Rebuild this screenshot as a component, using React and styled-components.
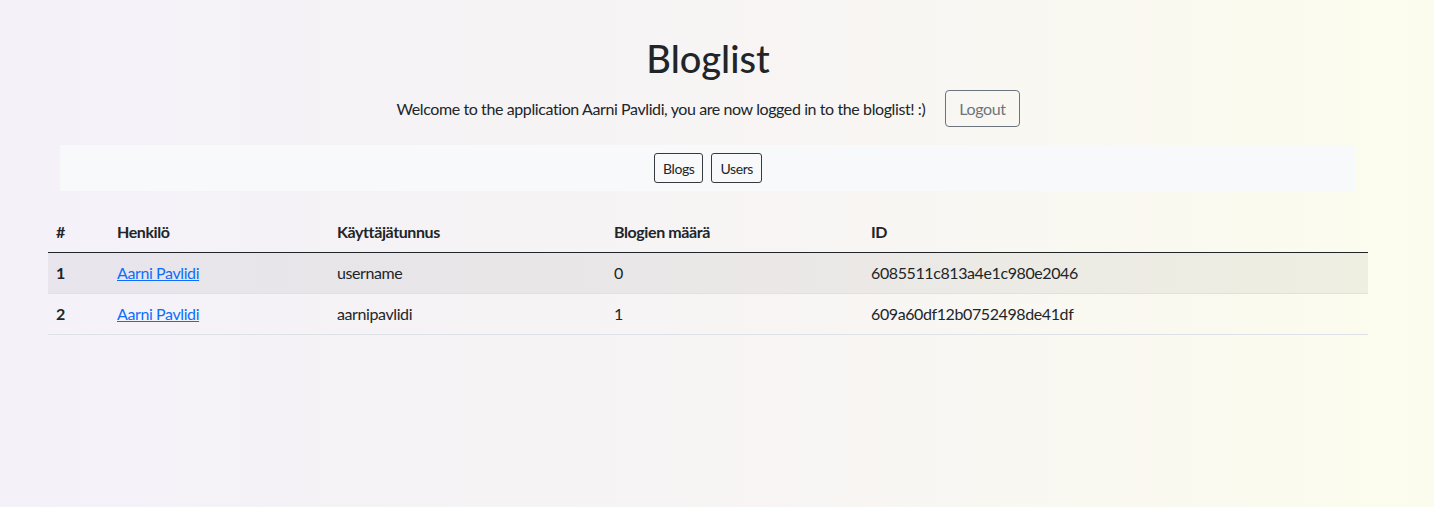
import React from 'react';
import styled, { createGlobalStyle } from 'styled-components';

const GlobalStyle = createGlobalStyle`
  html, body {
    margin: 0;
    padding: 0;
  }
  body {
    min-height: 507px;
    background: linear-gradient(90deg, #f4f1f9 0%, #f7f4f4 50%, #fcfcee 100%);
    font-family: Lato, "Noto Sans", sans-serif;
    color: #212529;
    letter-spacing: -0.4px;
  }
`;

const Page = styled.div`
  width: 1416px;
  padding-top: 34px;
`;

const Container = styled.div`
  width: 1320px;
  margin: 0 auto;
`;

const Title = styled.h1`
  margin: 0 0 8px;
  text-align: center;
  font-size: 38px;
  font-weight: 500;
  line-height: 48px;
  letter-spacing: 0;
`;

const Welcome = styled.div`
  display: flex;
  justify-content: center;
  align-items: center;
  gap: 20px;
  font-size: 16px;
`;

const OutlineButton = styled.button`
  font-family: inherit;
  letter-spacing: inherit;
  background: transparent;
  cursor: pointer;
  border-radius: ${(p) => (p.small ? '3px' : '4px')};
  border: 1px solid ${(p) => (p.dark ? '#343a40' : '#6c757d')};
  color: ${(p) => (p.dark ? '#212529' : '#6c757d')};
  font-size: ${(p) => (p.small ? '14px' : '16px')};
  height: ${(p) => (p.small ? '30px' : '37px')};
  padding: ${(p) => (p.small ? '0 8px' : '0 13px')};
`;

const NavBar = styled.nav`
  margin: 18px 12px 21px;
  height: 46px;
  background: #f8f9fa;
  display: flex;
  justify-content: center;
  align-items: center;
  gap: 8px;
`;

const Table = styled.table`
  width: 100%;
  table-layout: fixed;
  border-collapse: collapse;
  font-size: 16px;
`;

const HeadCell = styled.th`
  box-sizing: border-box;
  text-align: left;
  font-weight: 700;
  padding: 8px;
  line-height: 24px;
  border-bottom: 1px solid #212529;
  width: ${(p) => p.w || 'auto'};
`;

const Row = styled.tr`
  background: ${(p) => (p.striped ? 'rgba(0, 0, 0, 0.05)' : 'transparent')};
`;

const Cell = styled.td`
  padding: 8px;
  line-height: 24px;
  border-bottom: 1px solid #dee2e6;
  font-weight: ${(p) => (p.bold ? 700 : 400)};
`;

const UserLink = styled.a`
  color: #0d6efd;
  text-decoration: underline;
`;

const users = [
  { name: 'Aarni Pavlidi', username: 'username', blogs: 0, id: '6085511c813a4e1c980e2046' },
  { name: 'Aarni Pavlidi', username: 'aarnipavlidi', blogs: 1, id: '609a60df12b0752498de41df' },
];

const App = () => (
  <>
    <GlobalStyle />
    <Page>
      <Container>
        <Title>Bloglist</Title>
        <Welcome>
          <span>Welcome to the application Aarni Pavlidi, you are now logged in to the bloglist! :)</span>
          <OutlineButton>Logout</OutlineButton>
        </Welcome>
        <NavBar>
          <OutlineButton small dark>Blogs</OutlineButton>
          <OutlineButton small dark>Users</OutlineButton>
        </NavBar>
        <Table>
          <thead>
            <tr>
              <HeadCell w="61px">#</HeadCell>
              <HeadCell w="220px">Henkilö</HeadCell>
              <HeadCell w="277px">Käyttäjätunnus</HeadCell>
              <HeadCell w="257px">Blogien määrä</HeadCell>
              <HeadCell>ID</HeadCell>
            </tr>
          </thead>
          <tbody>
            {users.map((u, i) => (
              <Row key={u.id} striped={i % 2 === 0}>
                <Cell bold>{i + 1}</Cell>
                <Cell><UserLink href="#">{u.name}</UserLink></Cell>
                <Cell>{u.username}</Cell>
                <Cell>{u.blogs}</Cell>
                <Cell>{u.id}</Cell>
              </Row>
            ))}
          </tbody>
        </Table>
      </Container>
    </Page>
  </>
);

export default App;
